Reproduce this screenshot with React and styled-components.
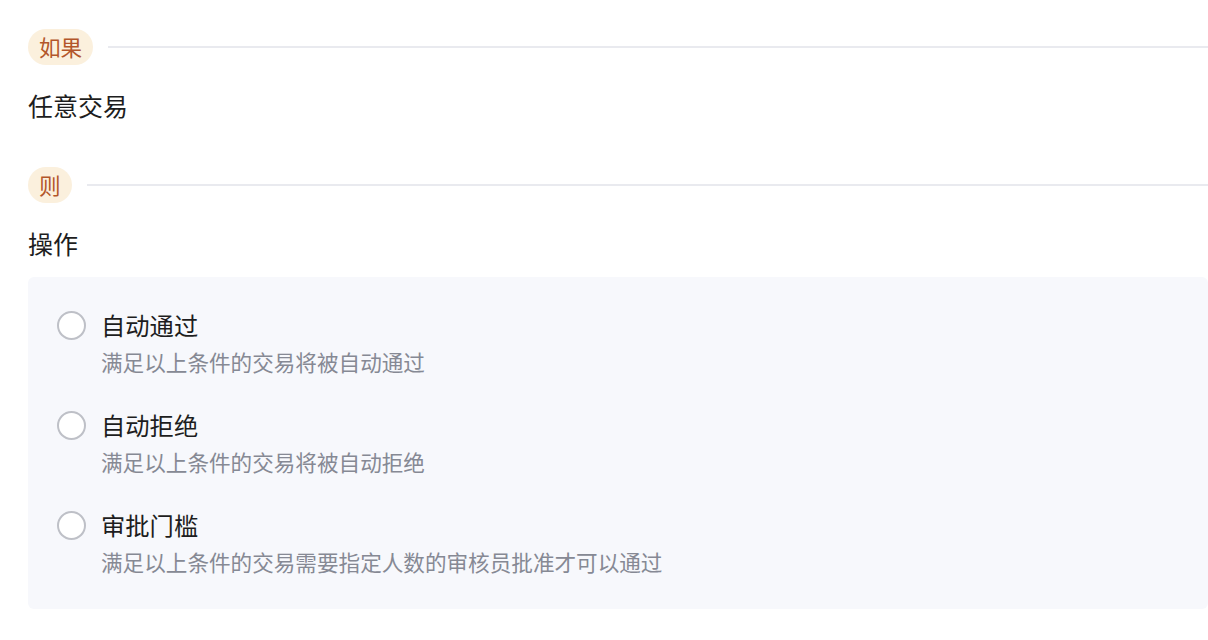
import React, { useState } from "react";
import styled, { createGlobalStyle } from "styled-components";

const GlobalStyle = createGlobalStyle`
  html, body {
    margin: 0;
    padding: 0;
    background: #ffffff;
  }
  body {
    font-family: "Noto Sans CJK SC", "Noto Sans", sans-serif;
    color: #1d1d20;
  }
`;

const Page = styled.div`
  padding: 29px 0 0 28px;
  display: flex;
  flex-direction: column;
`;

const Header = styled.div`
  display: flex;
  align-items: center;
  gap: 15px;
  height: 36px;
  margin-top: ${(p) => p.$top || 0}px;
`;

const Tag = styled.span`
  display: inline-flex;
  align-items: center;
  justify-content: center;
  height: 36px;
  padding: 0 11px;
  border-radius: 18px;
  background: #fbf0dd;
  color: #b3562a;
  font-size: 21.6px;
  line-height: 1;
`;

const Divider = styled.div`
  flex: 1;
  height: 2px;
  background: #e9eaef;
`;

const Title = styled.div`
  margin-top: 24px;
  font-size: 25px;
  line-height: 32px;
  color: #1d1d20;
`;

const Panel = styled.div`
  margin-top: 18px;
  background: #f7f8fc;
  border-radius: 6px;
  padding: 32px 29px 33px;
  display: flex;
  flex-direction: column;
  gap: 33px;
`;

const Option = styled.label`
  display: grid;
  grid-template-columns: 29px 1fr;
  column-gap: 15px;
  row-gap: 7px;
  align-items: center;
  cursor: pointer;
`;

const Radio = styled.span`
  width: 29px;
  height: 29px;
  box-sizing: border-box;
  border-radius: 50%;
  border: 2px solid ${(p) => (p.$checked ? "#b3562a" : "#bec0c7")};
  background: #ffffff;
  display: flex;
  align-items: center;
  justify-content: center;
  &::after {
    content: "";
    width: 13px;
    height: 13px;
    border-radius: 50%;
    background: ${(p) => (p.$checked ? "#b3562a" : "transparent")};
  }
`;

const Label = styled.span`
  font-size: 24.3px;
  line-height: 32px;
  color: #1d1d20;
`;

const Desc = styled.span`
  grid-column: 2;
  font-size: 21.6px;
  line-height: 28px;
  color: #868994;
`;

const options = [
  { key: "pass", label: "自动通过", desc: "满足以上条件的交易将被自动通过" },
  { key: "reject", label: "自动拒绝", desc: "满足以上条件的交易将被自动拒绝" },
  {
    key: "threshold",
    label: "审批门槛",
    desc: "满足以上条件的交易需要指定人数的审核员批准才可以通过",
  },
];

export default function App() {
  const [selected, setSelected] = useState(null);

  return (
    <>
      <GlobalStyle />
      <Page>
        <Header>
          <Tag>如果</Tag>
          <Divider />
        </Header>
        <Title>任意交易</Title>

        <Header $top={46}>
          <Tag>则</Tag>
          <Divider />
        </Header>
        <Title>操作</Title>

        <Panel>
          {options.map((o) => (
            <Option key={o.key} onClick={() => setSelected(o.key)}>
              <Radio $checked={selected === o.key} />
              <Label>{o.label}</Label>
              <Desc>{o.desc}</Desc>
            </Option>
          ))}
        </Panel>
      </Page>
    </>
  );
}
